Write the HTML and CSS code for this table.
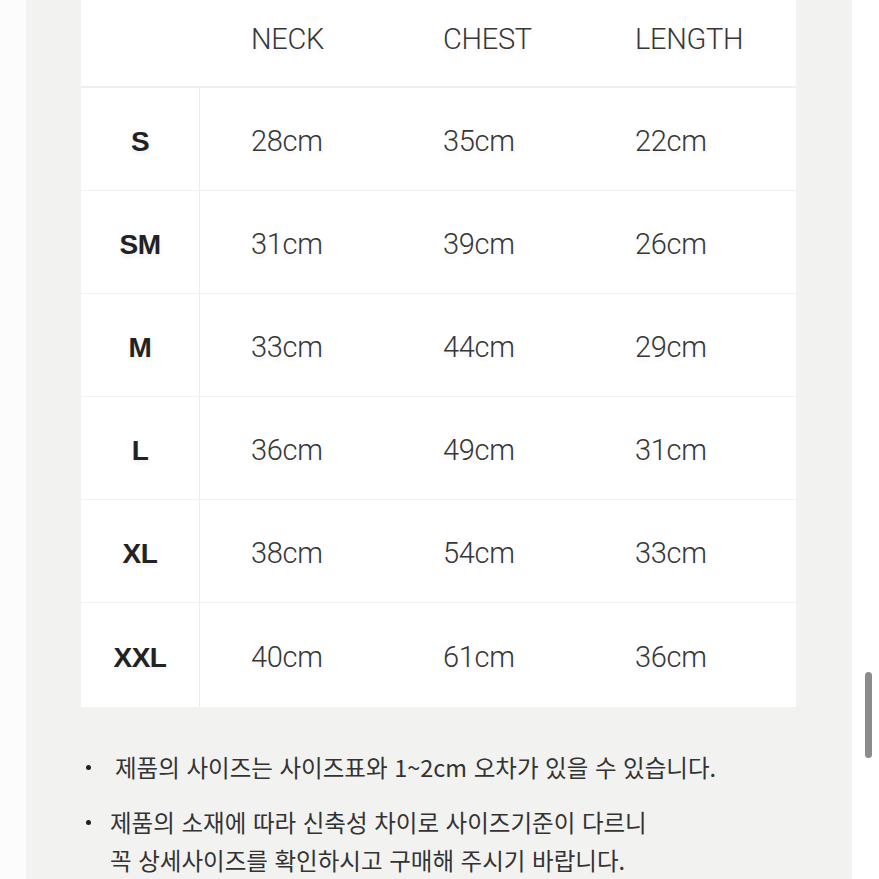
FILE: index.html
```html
<!DOCTYPE html>
<html lang="ko">
<head>
<meta charset="utf-8">
<title>Size chart</title>
<link rel="stylesheet" href="styles.css">
</head>
<body>
<div class="page">
  <div class="edge-left"></div>
  <main class="panel">
    <div class="size-table">
      <div class="row head">
        <div class="cell label"></div>
        <div class="cell">NECK</div>
        <div class="cell">CHEST</div>
        <div class="cell">LENGTH</div>
      </div>
      <div class="row">
        <div class="cell label">S</div>
        <div class="cell val first">28cm</div>
        <div class="cell val">35cm</div>
        <div class="cell val">22cm</div>
      </div>
      <div class="row">
        <div class="cell label">SM</div>
        <div class="cell val first">31cm</div>
        <div class="cell val">39cm</div>
        <div class="cell val">26cm</div>
      </div>
      <div class="row">
        <div class="cell label">M</div>
        <div class="cell val first">33cm</div>
        <div class="cell val">44cm</div>
        <div class="cell val">29cm</div>
      </div>
      <div class="row">
        <div class="cell label">L</div>
        <div class="cell val first">36cm</div>
        <div class="cell val">49cm</div>
        <div class="cell val">31cm</div>
      </div>
      <div class="row">
        <div class="cell label">XL</div>
        <div class="cell val first">38cm</div>
        <div class="cell val">54cm</div>
        <div class="cell val">33cm</div>
      </div>
      <div class="row last">
        <div class="cell label">XXL</div>
        <div class="cell val first">40cm</div>
        <div class="cell val">61cm</div>
        <div class="cell val">36cm</div>
      </div>
    </div>
    <ul class="notes">
      <li class="note"><span class="dot"></span><span class="note-text indent">제품의 사이즈는 사이즈표와 1~2cm 오차가 있을 수 있습니다.</span></li>
      <li class="note"><span class="dot"></span><span class="note-text">제품의 소재에 따라 신축성 차이로 사이즈기준이 다르니<br>꼭 상세사이즈를 확인하시고 구매해 주시기 바랍니다.</span></li>
    </ul>
  </main>
  <div class="edge-right"><div class="scroll-thumb"></div></div>
</div>
</body>
</html>
```

FILE: styles.css
```css
* { box-sizing: border-box; }
html, body {
  margin: 0;
  padding: 0;
  height: 100%;
  overflow: hidden;
  background: #ffffff;
}
body {
  font-family: "Noto Sans CJK KR", "Noto Sans", sans-serif;
  color: #333333;
}
.page {
  display: flex;
  height: 879px;
}
.edge-left {
  width: 26px;
  background: #fcfcfc;
}
.panel {
  width: 826px;
  background: #f2f2f1;
  padding: 0 56px 0 55px;
}
.edge-right {
  width: 27px;
  background: #ffffff;
  position: relative;
}
.scroll-thumb {
  position: absolute;
  left: 13px;
  top: 672px;
  width: 7px;
  height: 86px;
  border-radius: 4px;
  background: #8c8c8c;
}
.size-table {
  width: 715px;
  background: #ffffff;
}
.row {
  display: grid;
  grid-template-columns: 118px 192px 192px 1fr;
  height: 103px;
  border-bottom: 1px solid #f1f1f1;
}
.row.head {
  height: 88px;
  border-bottom: 2px solid #efefef;
}
.row.head .cell {
  padding-top: 0;
  padding-bottom: 8px;
}
.row.last {
  height: 104px;
  border-bottom: none;
}
.cell {
  display: flex;
  align-items: center;
  padding-left: 52px;
  padding-top: 4px;
  font-family: Roboto, "Liberation Sans", sans-serif;
  font-size: 29px;
  font-weight: 300;
  color: #363636;
  letter-spacing: -0.3px;
  text-shadow: 0 3px 4px rgba(0, 0, 0, 0.07);
}
.cell.label {
  justify-content: center;
  padding-left: 0;
  padding-top: 6px;
  font-family: "Liberation Sans", Arial, sans-serif;
  font-weight: 700;
  font-size: 28px;
  color: #222222;
  letter-spacing: -0.5px;
}
.cell.first {
  border-left: 1px solid #ececec;
  padding-left: 51px;
}
.notes {
  list-style: none;
  margin: 41px 0 0 0;
  padding: 0;
}
.note {
  display: flex;
  align-items: flex-start;
  font-size: 23.5px;
  line-height: 38px;
  color: #333333;
  letter-spacing: 0;
  margin-bottom: 17px;
}
.dot {
  flex: none;
  width: 5px;
  height: 5px;
  margin: 17px 19px 0 5px;
  border-radius: 50%;
  background: #222222;
}
.note-text.indent {
  padding-left: 5px;
}
```
